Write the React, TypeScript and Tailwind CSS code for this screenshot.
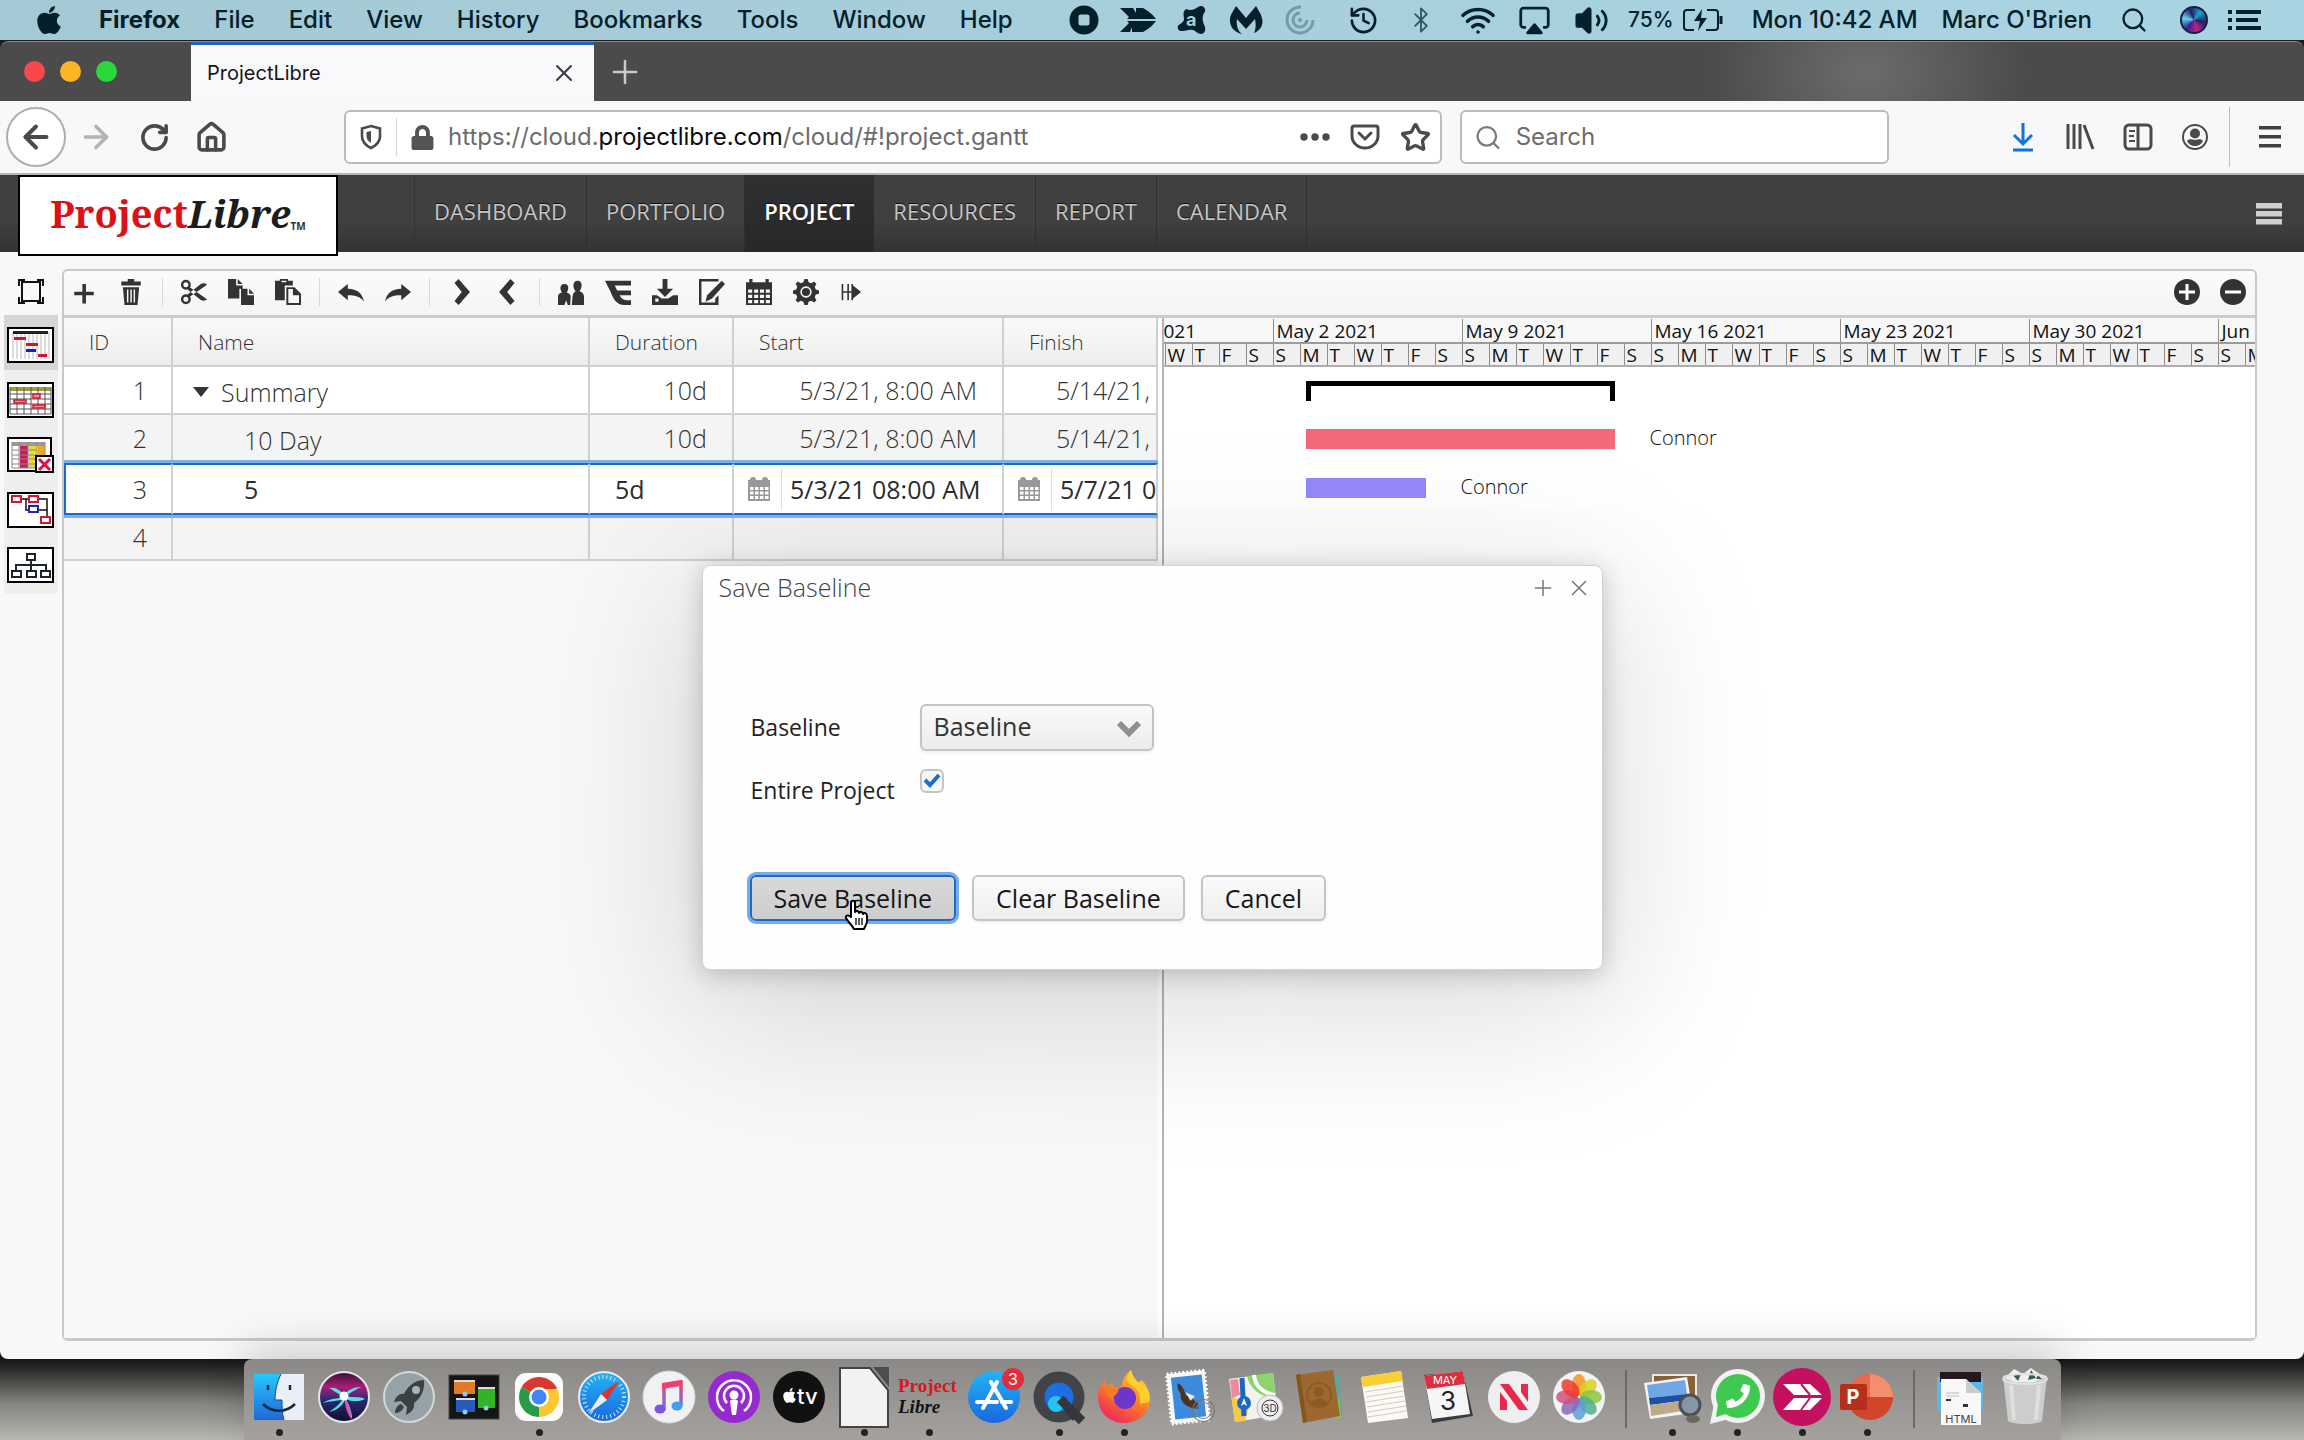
import type { ReactNode } from 'react'
import { Airplay, ArrowLeft, ArrowRight, Bluetooth, History, House, Plus, RotateCw, Search, Star, Volume2, Wifi, X } from 'lucide-react'
import { FaApple, FaLock, FaPhoneAlt } from 'react-icons/fa'

const sans = "font-['Inter','Liberation_Sans',sans-serif]"
const open = "font-['Open_Sans','Noto_Sans',sans-serif]"

/* ---------- menu bar ---------- */

const menus = ['File', 'Edit', 'View', 'History', 'Bookmarks', 'Tools', 'Window', 'Help']

function StatusSlot({ children }: { children: ReactNode }) {
  return <span className="flex w-[57px] justify-center">{children}</span>
}

function MenuBar() {
  return (
    <div className={`${sans} flex h-10 items-center justify-between bg-linear-to-r from-[#a4c9d4] to-[#a9d4e2] pr-[42px] pl-[33px] text-2xl text-[#04202b]`}>
      <nav className="flex items-center gap-[34px]">
        <FaApple size={32} aria-label="Apple" />
        <span className="font-bold">Firefox</span>
        {menus.map((m) => (
          <span key={m} className="font-medium">{m}</span>
        ))}
      </nav>
      <div className="flex items-center font-medium">
        <div className="mr-2 flex items-center">
          <span className="flex w-[54px] justify-center">
            <svg width="30" height="30" viewBox="0 0 30 30"><circle cx="15" cy="15" r="14.5" fill="currentColor" /><rect x="9.500" y="9.500" width="11" height="11" rx="2" fill="#a6cdd8" /></svg>
          </span>
          <span className="flex w-[54px] justify-center">
            <svg width="38" height="26" viewBox="0 0 38 26" fill="currentColor"><path d="M1 1h13l3 5v-5h7c6 3 10 7 13 11H8l2-2z" /><path d="M1 25h10l2-5v5h11c6-3 10-7 13-11H8l2 2z" /></svg>
          </span>
          <span className="flex w-[54px] justify-center">
            <svg width="30" height="30" viewBox="0 0 30 30"><path d="M9 4c4 2 8 1 12-2 3-2 6-1 7 2 1 2-1 4-2 6-1 4 0 8 2 12 1 4-1 7-4 7s-5-3-8-4c-4-1-7 1-11 1-3 0-5-2-4-5 1-2 4-2 6-6 0-4-2-8 2-11z" fill="currentColor" /><text x="9" y="21" fontSize="18" fontWeight="700" fontFamily="Inter" fill="#a6cdd8">a</text></svg>
          </span>
          <span className="flex w-[54px] justify-center">
            <svg width="34" height="30" viewBox="0 0 34 30" fill="currentColor"><path d="M13 29C2 27-2 16 3 8l4-7 10 12L27 1l4 7c5 9 2 17-6 20 2-4 2-9 1-14l-9 10-9-10c-1 7 1 12 5 15z" /></svg>
          </span>
          <span className="flex w-[54px] justify-center text-[#6f9dab]">
            <svg width="30" height="30" viewBox="0 0 30 30" fill="none" stroke="currentColor" strokeWidth="3"><path d="M16 2A13 13 0 1 0 28 15" /><path d="M15 8a7 7 0 1 0 7 7" /><circle cx="15" cy="15" r="2" fill="currentColor" stroke="none" /></svg>
          </span>
        </div>
        <StatusSlot><History size={31} /></StatusSlot>
        <StatusSlot><Bluetooth size={28} strokeWidth={1.6} className="text-[#2d5563]" /></StatusSlot>
        <StatusSlot><Wifi size={36} strokeWidth={2.4} /></StatusSlot>
        <StatusSlot><Airplay size={33} className="[&>path:last-child]:fill-current" /></StatusSlot>
        <StatusSlot><Volume2 size={35} className="[&>path:first-child]:fill-current" /></StatusSlot>
        <span className="ml-2 text-[21px]">75%</span>
        <svg width="42" height="24" viewBox="0 0 42 24" className="ml-2" fill="none" stroke="currentColor" strokeWidth="2">
          <path d="M13 2H5a3 3 0 0 0-3 3v14a3 3 0 0 0 3 3h7M25 2h8a3 3 0 0 1 3 3v14a3 3 0 0 1-3 3h-9" />
          <path d="M20 1l-8 12h6l-2 10 9-13h-6z" fill="currentColor" stroke="none" />
          <path d="M39 8v8" strokeWidth="3" />
        </svg>
        <span className="ml-7">Mon 10:42 AM</span>
        <span className="ml-6">Marc O'Brien</span>
        <Search size={28} className="ml-7" />
        <span className="ml-8 size-7 rounded-full border-2 border-[#182047] bg-[conic-gradient(from_40deg,#17a5c9,#242067,#b82582,#3b1e8b,#62d4f0,#271d6a,#17a5c9)]" />
        <svg width="34" height="22" viewBox="0 0 34 22" className="ml-5" fill="currentColor">
          <path d="M0 1h4v4H0zM8 1h25v4H8zM0 9h4v4H0zM8 9h22v4H8zM0 17h4v4H0zM8 17h25v4H8z" />
        </svg>
      </div>
    </div>
  )
}

/* ---------- browser chrome ---------- */

function TabStrip() {
  return (
    <div className="flex h-[60px] items-stretch rounded-t-lg border-t border-[#8a8c8c] bg-[radial-gradient(ellipse_160px_120px_at_81%_50%,#6b6d6d,transparent)] bg-[#4a4b4a]">
      <div className="flex w-[191px] items-center gap-[15px] pl-6">
        <span className="size-[21px] rounded-full bg-[#f9474c]" />
        <span className="size-[21px] rounded-full bg-[#fcb625]" />
        <span className="size-[21px] rounded-full bg-[#2bd739]" />
      </div>
      <div className={`${sans} flex w-[403px] items-center justify-between border-t-3 border-[#2160c4] bg-[#f9f9fb] px-4 text-[20px] text-[#15141a]`}>
        ProjectLibre
        <button aria-label="Close tab"><X size={28} strokeWidth={1.8} className="text-[#3e3e42]" /></button>
      </div>
      <button aria-label="New tab" className="px-3"><Plus size={38} strokeWidth={1.6} className="text-[#c9caca]" /></button>
    </div>
  )
}

function NavBar() {
  return (
    <div className={`${sans} flex h-[74px] items-center border-b-2 border-[#b6b6b8] bg-[#f8f8fa] text-[#4a4a4c]`}>
      <button aria-label="Back" className="ml-[6px] flex size-[60px] items-center justify-center rounded-full border-2 border-[#adadaf] bg-white"><ArrowLeft size={36} strokeWidth={2.6} /></button>
      <button aria-label="Forward" className="flex w-[59px] justify-center text-[#b3b3b5]"><ArrowRight size={36} strokeWidth={2.4} /></button>
      <button aria-label="Reload" className="flex w-[59px] justify-center"><RotateCw size={31} strokeWidth={2.8} /></button>
      <button aria-label="Home" className="flex w-[54px] justify-center"><House size={33} strokeWidth={2.6} /></button>
      <div className="ml-[106px] flex h-[54px] flex-[1109] items-center rounded-md border-2 border-[#bcbcbe] bg-white">
        <svg width="24" height="26" viewBox="0 0 24 26" className="mx-[13px]" fill="none" stroke="#4a4a4c" strokeWidth="2.600"><path d="M12 2l9 2.500v8c0 5-4 9-9 11.500C7 21.500 3 17.500 3 12.500v-8z" /><path d="M12 7v12c-3-2-4.500-4-4.500-7V8z" fill="#4a4a4c" stroke="none" /></svg>
        <span className="h-[38px] w-px bg-[#d3d3d5]" />
        <FaLock size={25} className="mx-[13px] text-[#545456]" />
        <div role="textbox" contentEditable suppressContentEditableWarning aria-label="Address" className="flex-1 text-2xl text-[#6c6c6e] outline-none">
          https://cloud.<span className="text-[#0c0c0d]">projectlibre.com</span>/cloud/#!project.gantt
        </div>
        <button aria-label="Page actions" className="mr-5">
          <svg width="30" height="8" viewBox="0 0 30 8" fill="#4a4a4c"><circle cx="4" cy="4" r="3.700" /><circle cx="15" cy="4" r="3.700" /><circle cx="26" cy="4" r="3.700" /></svg>
        </button>
        <button aria-label="Save to Pocket" className="mr-5">
          <svg width="30" height="26" viewBox="0 0 30 26" fill="none" stroke="#4a4a4c" strokeWidth="3"><path d="M4 2h22a2 2 0 0 1 2 2v8a13 12 0 0 1-26 0V4a2 2 0 0 1 2-2z" /><path d="M9 9l6 6 6-6" strokeLinecap="round" /></svg>
        </button>
        <button aria-label="Bookmark" className="mr-[9px]"><Star size={31} strokeWidth={2.6} /></button>
      </div>
      <label className="ml-[18px] flex h-[54px] flex-[419] items-center rounded-md border-2 border-[#bcbcbe] bg-white pl-3">
        <Search size={31} className="text-[#7b7b7d]" />
        <input type="search" placeholder="Search" aria-label="Search" className="ml-[14px] w-full min-w-0 text-2xl outline-none placeholder:text-[#6c6c6e]" />
      </label>
      <div className="ml-[120px] flex items-center gap-7">
        <svg width="28" height="30" viewBox="0 0 28 30" fill="none" stroke="#0f71e6" strokeWidth="3"><path d="M14 1v20M5 13l9 9 9-9M4 28h20" /></svg>
        <svg width="30" height="28" viewBox="0 0 30 28" fill="none" stroke="currentColor" strokeWidth="3"><path d="M3 1v25M9 1v25M15 1v25M19 2l9 24" /></svg>
        <svg width="30" height="28" viewBox="0 0 30 28" fill="none" stroke="currentColor" strokeWidth="3"><rect x="2" y="2" width="26" height="24" rx="4" /><path d="M15 2v24" /><path d="M6 8h6M6 13h5M6 18h6" strokeWidth="2" /></svg>
        <svg width="28" height="28" viewBox="0 0 28 28"><circle cx="14" cy="14" r="12" fill="none" stroke="currentColor" strokeWidth="2" /><circle cx="14" cy="10.500" r="5" fill="currentColor" /><path d="M6 18c3-3 5-1 8-1s5-2 8 1c-2 4-5 5-8 5s-6-1-8-5z" fill="currentColor" /></svg>
      </div>
      <span className="ml-5 h-[60px] w-px bg-[#bdbdbf]" />
      <button aria-label="Open menu" className="mr-[22px] ml-7">
        <svg width="24" height="24" viewBox="0 0 24 24" fill="#404042"><path d="M1 1h22v3.500H1zM1 10h22v3.500H1zM1 19h22v3.500H1z" /></svg>
      </button>
    </div>
  )
}

/* ---------- application ---------- */

const sections = ['DASHBOARD', 'PORTFOLIO', 'PROJECT', 'RESOURCES', 'REPORT', 'CALENDAR']

function AppHeader() {
  return (
    <header className="flex h-[77px] items-stretch bg-linear-to-b from-[#404040] from-60% to-[#343333]">
      <a href="#dashboard" className="z-10 -mb-1 ml-[18px] flex w-[320px] items-center justify-center border-2 border-black bg-white pb-1 font-['Noto_Serif','Liberation_Serif',serif] text-[38px] font-bold">
        <span className="text-[#dc1017]">Project</span>
        <span className="text-[#1c1c1c] italic">Libre</span>
        <span className="self-end pb-4 font-sans text-[10px] text-[#333]">TM</span>
      </a>
      <nav className={`${open} ml-[76px] flex border-l border-[#333] text-[22px] text-[#c6c6c6] [text-shadow:0_-1px_0_#111]`}>
        {sections.map((s) => (
          <a
            key={s}
            href={`#${s.toLowerCase()}`}
            className={`flex items-center border-r border-[#2e2e2e] px-[19px] pb-1 ${s === 'PROJECT' ? 'bg-linear-to-b from-[#2e3032] to-[#26282a] font-semibold text-white' : 'font-medium'}`}
          >
            {s}
          </a>
        ))}
      </nav>
      <button aria-label="Menu" className="mr-[22px] ml-auto">
        <svg width="26" height="22" viewBox="0 0 26 22" fill="#cfcfcf"><path d="M0 0h26v5.500H0zM0 8h26v5.500H0zM0 16h26v5.500H0z" /></svg>
      </button>
    </header>
  )
}

const views: { name: string; art: ReactNode }[] = [
  {
    name: 'Gantt',
    art: (
      <>
        <path d="M6 5v27M10 5v27M14 5v27M18 5v27M22 5v27M26 5v27M30 5v27M34 5v27M38 5v27M42 5v27" stroke="#b9b9b9" />
        <path d="M6 4h35v3H6z" fill="#222" />
        <path d="M7 10h12v3H7zM19 16h12v3H19zM31 27h9v3h-9z" fill="#d3142e" />
        <path d="M19 22h10v3H19z" fill="#1a1ad0" />
      </>
    ),
  },
  {
    name: 'Task usage',
    art: (
      <>
        <path d="M3 5h41v4H3z" fill="#9c9a3a" />
        <path d="M3 5v27h41V5M10 5v27M17 5v27M24 5v27M31 5v27M38 5v27M3 12h41M3 17h41M3 22h41M3 27h41" fill="none" stroke="#555" />
        <path d="M7 18h12v3H7zM26 12h7v4h-7zM26 23h12v3H26z" fill="#ef8d99" stroke="#cf1830" strokeWidth="1.500" />
      </>
    ),
  },
  {
    name: 'Resource usage',
    art: (
      <>
        <path d="M5 5h33v4H5z" fill="#999" />
        <path d="M13 9h8v22h-8z" fill="#c81d56" />
        <path d="M22 9h8v22h-8z" fill="#eadb2e" />
        <path d="M31 9h7v22h-7z" fill="#eeaa27" />
        <path d="M5 5v26h33V5M12 5v26M21 5v26M30 5v26M5 13h25M5 18h25M5 22h25M5 27h25" fill="none" stroke="#888" />
        <rect x="29" y="19" width="17" height="16" fill="#fff" stroke="#000" strokeWidth="2" />
        <path d="M32 22l11 11M43 22l-11 11" stroke="#e01040" strokeWidth="3" />
      </>
    ),
  },
  {
    name: 'Network',
    art: (
      <>
        <path d="M14 7h8M19 7v11h3M32 7h8v18M32 18h8" fill="none" stroke="#111" strokeWidth="1.500" />
        <path d="M5 4h9v6H5zM22 4h9v6h-9zM34 25h9v6h-9z" fill="#fff" stroke="#cf1838" strokeWidth="2" />
        <path d="M22 14h9v6h-9z" fill="#fff" stroke="#2222c5" strokeWidth="2" />
      </>
    ),
  },
  {
    name: 'WBS',
    art: <path d="M20 7h8v6h-8zM5 24h9v6H5zM20 24h9v6h-9zM34 24h9v6h-9zM24 13v11M9 24v-6h30v6" fill="none" stroke="#1b2430" strokeWidth="2" />,
  },
]

function Sidebar() {
  return (
    <aside className="flex w-[62px] flex-col items-stretch pr-[4px] pl-1">
      <button aria-label="Full screen" className="flex h-[46px] items-center justify-center">
        <svg width="28" height="28" viewBox="0 0 28 28" fill="none" stroke="#111" strokeWidth="2"><rect x="5" y="4" width="18" height="19" /><path d="M2 8V2h6M20 2h6v6M26 19v6h-6M8 25H2v-6" /></svg>
      </button>
      <div className="rounded-b bg-[#eeeeee] pb-1">
        {views.map((v, i) => (
          <button key={v.name} aria-label={v.name} className={`flex h-[55px] w-full items-center justify-center pt-[6px] ${i === 0 ? 'bg-[#d6d6d6]' : ''}`}>
            <svg width="48" height="37" viewBox="0 0 48 37">
              <rect x="1" y="1" width={i === 2 ? 43 : 45} height={i === 2 ? 33 : 34} fill="#fff" stroke="#000" strokeWidth="2" />
              {v.art}
            </svg>
          </button>
        ))}
      </div>
    </aside>
  )
}

const tools: (null | { name: string; art: ReactNode })[] = [
  { name: 'Add', art: <path d="M7 3h2.200v4.800H14V10H9.200v5H7v-5H2V7.800h5z" /> },
  { name: 'Delete', art: <path d="M6 0h4v1.500h4V4H2V1.500h4zM3 5h10l-1 11H4zM5.500 6.500v8h.9v-8zM7.600 6.500v8h.9v-8zM9.600 6.500v8h.9v-8z" fillRule="evenodd" /> },
  null,
  {
    name: 'Cut',
    art: (
      <>
        <g fill="none" stroke="currentColor" strokeWidth="1.500"><circle cx="3" cy="3.500" r="2.300" /><circle cx="3" cy="12.500" r="2.300" /></g>
        <path d="M4.500 4.500L16 12.500c-1.500 1.200-2.800 1-4 .2L4 6.500zM4.500 11.500L16 3.500c-1.500-1.200-2.800-1-4-.2L4 9.500z" />
      </>
    ),
  },
  { name: 'Copy', art: <path d="M0 0h5v4h4v2H7v6H0zM6 0l3 3H6zM8 6h4v4h4v6H8zM13 6l3 3h-3z" /> },
  { name: 'Paste', art: <path d="M0 1h3V0h5v1h3v3H6v9H0zM4 1v1h3V1zM7 5h5l4 4v7H7zM8.200 6.200v8.600h6.600V10H11V6.200z" fillRule="evenodd" /> },
  null,
  { name: 'Undo', art: <path d="M0 8l6-5v3c6 0 9 3 10 8-2-3-5-4-10-4v3z" /> },
  { name: 'Redo', art: <path d="M16 8l-6-5v3C4 6 1 9 0 14c2-3 5-4 10-4v3z" /> },
  null,
  { name: 'Indent', art: <path d="M4 2.500L6.500 0l7 8-7 8L4 13.500 8.500 8z" /> },
  { name: 'Outdent', art: <path d="M12 2.500L9.500 0l-7 8 7 8 2.500-2.500L7.500 8z" /> },
  null,
  { name: 'Resources', art: <path d="M12 1c2 0 2.800 1.500 2.500 3.500-.2 1.500-.8 2.500-1.200 3 1.500.5 2.700 1.500 2.700 3.500v5H8.500l.4-5c.2-2 .9-3 2-3.500-1-1-1.400-2-1.400-3.500C9.500 2 10.500 1 12 1zM4 3c1.700 0 2.500 1 2.300 2.800-.1 1.200-.6 2-1 2.500 1.200.4 2.200 1 2.500 2.200L7.500 16H6l-1-3-1 3H0v-5c0-1.500.8-2.300 2.500-2.700C2 7.500 1.600 7 1.500 5.800 1.400 4 2.300 3 4 3z" /> },
  { name: 'Work breakdown', art: <path d="M0 1h16v3H6l1.500 3H16v3H9c1 2 2.500 3 4 3h3v3h-4c-5 0-7-4-8.500-8z" /> },
  { name: 'Save', art: <path d="M6.500 0h3v6H13l-5 5-5-5h3.500zM0 10h3l3 2h4l3-2h3v6H0zM2 12v2h2v-2z" fillRule="evenodd" /> },
  { name: 'Edit', art: <path d="M0 0h12v1.500H1.500v13H10V12l2-2v6H0zM14 1l2 2-8 9-4 2 1-4z" fillRule="evenodd" /> },
  { name: 'Calendar', art: <path d="M0 2h2V0h2v2h8V0h2v2h2v14H0zM1.300 6.500V8.500h2.500v-2zM5 6.500v2h2.500v-2zM8.600 6.500v2h2.500v-2zM12.200 6.500v2h2.500v-2zM1.300 9.700v2h2.500v-2zM5 9.700v2h2.500v-2zM8.600 9.700v2h2.500v-2zM12.200 9.700v2h2.500v-2zM1.300 12.900v2h2.500v-2zM5 12.900v2h2.500v-2zM8.600 12.900v2h2.500v-2zM12.200 12.900v2h2.500v-2z" fillRule="evenodd" /> },
  {
    name: 'Settings',
    art: (
      <>
        <path d="M7 0h2l.6 2 1.600.6L13 1.600 14.400 3l-1 1.800.6 1.600 2 .6v2l-2 .6-.6 1.600 1 1.800-1.400 1.400-1.800-1-1.600.6L9 16H7l-.6-2-1.600-.6-1.800 1L1.600 13l1-1.800L2 9.600 0 9V7l2-.6.6-1.600-1-1.800L3 1.600l1.800 1L6.400 2z" />
        <circle cx="8" cy="8" r="3" fill="none" stroke="#f6f6f6" />
      </>
    ),
  },
  { name: 'Split', art: <path d="M1 3h1v4.500h2.500V3h1v4.500H7V3h1v1l5 4-5 4v1H7V8.500H5.500V13h-1V8.500H2V13H1z" /> },
]

function Toolbar() {
  return (
    <div className="flex h-[47px] items-center gap-4 rounded-t-md border-b-3 border-[#cbcbcb] bg-linear-to-b from-[#fbfbfb] to-[#f4f4f4] pr-[9px] pb-[3px] pl-1 text-[#333]">
      {tools.map((t, i) =>
        t ? (
          <button key={t.name} aria-label={t.name} className="flex w-[31px] justify-center">
            <svg width="26" height="26" viewBox="0 0 16 16" fill="currentColor">{t.art}</svg>
          </button>
        ) : (
          <span key={i} className="-mr-px h-[28px] w-px bg-[#dadada]" />
        ),
      )}
      <button aria-label="Zoom in" className="mr-1 ml-auto">
        <svg width="26" height="26" viewBox="0 0 26 26"><circle cx="13" cy="13" r="13" fill="#333" /><path d="M13 5v16M5 13h16" stroke="#fff" strokeWidth="3" /></svg>
      </button>
      <button aria-label="Zoom out">
        <svg width="26" height="26" viewBox="0 0 26 26"><circle cx="13" cy="13" r="13" fill="#333" /><path d="M5 13h16" stroke="#fff" strokeWidth="3" /></svg>
      </button>
    </div>
  )
}

function CalendarGlyph() {
  return (
    <svg width="24" height="26" viewBox="0 0 24 26" fill="#999">
      <path d="M1 4h2a3 3 0 0 1 6 0h6a3 3 0 0 1 6 0h2v21H1zM3 11v3h3.500v-3zM8 11v3h3.500v-3zM13 11v3h3.500v-3zM18 11v3h3.500v-3zM3 15.500v3h3.500v-3zM8 15.500v3h3.500v-3zM13 15.500v3h3.500v-3zM18 15.500v3h3.500v-3zM3 20v3h3.500v-3zM8 20v3h3.500v-3zM13 20v3h3.500v-3zM18 20v3h3.500v-3z" fillRule="evenodd" />
    </svg>
  )
}

function DateField({ label, value }: { label: string; value: string }) {
  return (
    <div className="flex items-center pl-[13px]">
      <button aria-label={`Pick ${label}`} className="pr-[10px]"><CalendarGlyph /></button>
      <input aria-label={label} defaultValue={value} className="h-[42px] w-[210px] shrink-0 border-l border-[#dedede] pl-2 outline-none" />
    </div>
  )
}

const td = 'overflow-hidden border-r-2 border-b-2 border-[#d0d0d0] whitespace-nowrap p-0'
const tdActive = 'overflow-hidden border-y-2 border-r-2 border-y-[#1c6ac6] border-r-[#d0d0d0] whitespace-nowrap p-0'

function TaskTable() {
  return (
    <div className="w-1/2 overflow-hidden bg-[#f8f8f8]">
      <table className={`${open} w-full table-fixed border-separate border-spacing-0 text-[25px] leading-8 font-light text-[#333]`}>
        <colgroup>
          <col className="w-[109px]" />
          <col className="w-[417px]" />
          <col className="w-[144px]" />
          <col className="w-[270px]" />
          <col />
        </colgroup>
        <thead>
          <tr className="h-[49px] bg-linear-to-b from-[#fafafa] to-[#ededed] text-left text-[21px]">
            {['ID', 'Name', 'Duration', 'Start', 'Finish'].map((h) => (
              <th key={h} className={`${td} pl-[25px] font-light`}>{h}</th>
            ))}
          </tr>
        </thead>
        <tbody>
          <tr className="h-12 bg-white">
            <td className={`${td} pr-[24px] text-right`}>1</td>
            <td className={`${td} pt-1 pl-5`}>
              <div className="flex items-center gap-3">
                <svg width="16" height="10" viewBox="0 0 16 10" fill="#333"><path d="M0 0h16L8 10z" /></svg>
                Summary
              </div>
            </td>
            <td className={`${td} pr-[25px] text-right`}>10d</td>
            <td className={`${td} pr-[25px] text-right`}>5/3/21, 8:00 AM</td>
            <td className={`${td} pl-[52px]`}>5/14/21,</td>
          </tr>
          <tr className="h-12 bg-[#f4f4f4]">
            <td className={`${td} pr-[24px] text-right`}>2</td>
            <td className={`${td} pt-1 pl-[71px]`}>10 Day</td>
            <td className={`${td} pr-[25px] text-right`}>10d</td>
            <td className={`${td} pr-[25px] text-right`}>5/3/21, 8:00 AM</td>
            <td className={`${td} pl-[52px]`}>5/14/21,</td>
          </tr>
          <tr className="relative z-10 h-[52px] bg-white font-normal text-[#2c2c2c] outline-3 outline-[#7db0ea]">
            <td className={`${tdActive} border-l-2 border-l-[#1c6ac6] pr-[24px] text-right font-light`}>3</td>
            <td className={`${tdActive} pl-[71px]`}><input aria-label="Name" defaultValue="5" className="block w-[300px] outline-none" /></td>
            <td className={`${tdActive} pl-[25px]`}><input aria-label="Duration" defaultValue="5d" className="block w-[100px] outline-none" /></td>
            <td className={tdActive}><DateField label="Start" value="5/3/21 08:00 AM" /></td>
            <td className={tdActive}><DateField label="Finish" value="5/7/21 05:00 PM" /></td>
          </tr>
          <tr className="h-[46px] bg-[#f4f4f4]">
            <td className={`${td} pr-[24px] text-right`}>4</td>
            <td className={td} />
            <td className={td} />
            <td className={td} />
            <td className={td} />
          </tr>
        </tbody>
      </table>
    </div>
  )
}

const weeks = ['May 2 2021', 'May 9 2021', 'May 16 2021', 'May 23 2021', 'May 30 2021', 'Jun 6 2021']
const days = ['S', 'M', 'T', 'W', 'T', 'F', 'S']
const DAY = 27

function Gantt() {
  const labels = [...days.slice(3), ...weeks.flatMap(() => days)]
  return (
    <div className={`${open} w-1/2 overflow-hidden border-l-2 border-[#b5b5b5] bg-white text-[19px] text-[#111]`}>
      <div className="flex h-[26px] border-b-2 border-[#9b9b9b] bg-[#f7f7f7] pt-px leading-6">
        <div className="w-[109px] shrink-0">021</div>
        {weeks.map((w) => (
          <div key={w} className="w-[189px] shrink-0 border-l border-[#8d8d8d] pl-[3px]">{w}</div>
        ))}
      </div>
      <div className="flex h-[23px] border-b-2 border-[#adadad] bg-[#f0f0f0] pl-px leading-[22px]">
        {labels.map((d, i) => (
          <div key={i} className="w-[27px] shrink-0 border-l border-[#8d8d8d] pl-[2px]">{d}</div>
        ))}
      </div>
      <div className="relative h-48 text-[20px] leading-7 font-light">
        {/* four days precede May 2, bars start on the morning of May 3 */}
        <div className="absolute top-[14px] h-5 border-x-5 border-t-5 border-black" style={{ left: 5 * DAY + 7, width: 309 }} />
        <div className="absolute top-[62px] h-5 bg-[#f2697c]" style={{ left: 5 * DAY + 7, width: 309 }} />
        <span className="absolute top-[57px]" style={{ left: 18 * DAY }}>Connor</span>
        <div className="absolute top-[111px] h-5 bg-[#9488fb]" style={{ left: 5 * DAY + 7, width: 120 }} />
        <span className="absolute top-[106px]" style={{ left: 11 * DAY }}>Connor</span>
      </div>
    </div>
  )
}

const btn = 'h-[46px] rounded-md border-2 bg-linear-to-b px-[22px] pt-[3px]'
const btnPlain = 'border-[#c4c4c4] from-[#fbfbfb] to-[#efefef] shadow-[0_2px_3px_rgba(0,0,0,0.06)]'
const btnFocused = 'border-[#1c69c7] from-[#d9d9d9] to-[#cdcdcd] shadow-[0_0_0_3px_#76ace8]'

function BaselineDialog() {
  return (
    <div role="dialog" aria-label="Save Baseline" className={`${open} relative h-[405px] w-[901px] rounded-lg border border-[#d2d2d2] bg-[#fefefe] text-[25px] text-[#222] shadow-[0_4px_24px_rgba(0,0,0,0.2),0_32px_160px_12px_rgba(0,0,0,0.15)]`}>
      <div className="flex h-[45px] items-center pr-[10px] pl-4 font-light text-[#444]">
        <h2 className="flex-1">Save Baseline</h2>
        <button aria-label="Maximize" className="mr-[10px] text-[#777]"><Plus size={26} strokeWidth={1.4} /></button>
        <button aria-label="Close" className="text-[#777]"><X size={26} strokeWidth={1.4} /></button>
      </div>
      <form className="px-12 pt-[93px]" onSubmit={(e) => e.preventDefault()}>
        <div className="flex items-center">
          <label htmlFor="baseline" className="w-[169px] text-[23px]">Baseline</label>
          <div className="relative">
            <select id="baseline" className="h-[47px] w-[234px] appearance-none rounded-md border-2 border-[#c4c4c4] bg-linear-to-b from-[#fafafa] to-[#ececec] pl-3 text-[#333] shadow-[0_2px_3px_rgba(0,0,0,0.06)]">
              <option>Baseline</option>
            </select>
            <svg width="26" height="18" viewBox="0 0 26 18" className="pointer-events-none absolute top-4 right-3" fill="none" stroke="#909090" strokeWidth="6"><path d="M3 3l10 10L23 3" /></svg>
          </div>
        </div>
        <div className="mt-[18px] flex items-start">
          <label htmlFor="entire" className="w-[169px] pt-[3px] text-[23px] leading-9">Entire Project</label>
          <div className="relative size-6">
            <input id="entire" type="checkbox" defaultChecked className="block size-6 appearance-none rounded-md border-2 border-[#c4c4c4] bg-[#f7f7f7]" />
            <svg viewBox="0 0 24 24" className="pointer-events-none absolute inset-0" fill="none" stroke="#1670cf" strokeWidth="4"><path d="M5 11l5 5 9-10" /></svg>
          </div>
        </div>
        <div className="-ml-px mt-[67px] flex gap-4 text-[#161616]">
          <button className={`${btn} ${btnFocused} relative`}>
            Save Baseline
            <svg width="28" height="32" viewBox="0 0 28 32" className="absolute top-[22px] left-[92px]" fill="#fff" stroke="#000" strokeWidth="2" strokeLinejoin="round">
              <path d="M7 18V4c0-3 4-3 4 0v9c1-2 4-1 4 1 1-2 4-1 4 1 1-2 4-1 4 2v5c0 3-2 5-3 8H10c-2-4-6-7-8-11-1-2 2-4 5-1z" />
              <path d="M12 19v7M15 19v7M18 19v7" strokeWidth="1.300" />
            </svg>
          </button>
          <button className={`${btn} ${btnPlain}`}>Clear Baseline</button>
          <button className={`${btn} ${btnPlain}`}>Cancel</button>
        </div>
      </form>
    </div>
  )
}

/* ---------- dock ---------- */

const petals = ['#f7931e', '#d9d021', '#8cc63f', '#4fb08c', '#5aa0d8', '#8a67b8', '#d05080', '#ee3a2c']

const dock: (null | { name: string; running?: boolean; art: ReactNode })[] = [
  {
    name: 'Finder',
    running: true,
    art: (
      <>
        <rect x="2" y="4" width="50" height="46" fill="#e9eff6" />
        <path d="M2 4h27c-4 8-6 17-6 26h7c0 7 0 13 2 20H2z" fill="url(#blue)" />
        <path d="M16 15v5M38 15v5" stroke="#142742" strokeWidth="2.500" />
        <path d="M11 34c9 9 23 9 32 0" fill="none" stroke="#142742" strokeWidth="2.500" />
        <path d="M29 4c-4 8-6 17-6 26h7c0 7 0 13 2 20" fill="none" stroke="#1c4b84" />
      </>
    ),
  },
  {
    name: 'Siri',
    art: (
      <>
        <circle cx="27" cy="27" r="25" fill="url(#siri)" stroke="#e5e5ea" strokeWidth="2" />
        <path d="M6 33c8-6 15-3 21-7-8-2-11-7-15-8 7-1 12 3 15 7 3-5 10-8 17-8-6 3-11 6-15 9 7 2 13 0 19 3-6 3-13 3-19 0 3 6 6 12 6 20-4-6-6-13-7-19-4 8-9 10-16 12 6-4 11-8 13-12-6 1-12 1-19 3z" fill="#5de0dc" />
        <path d="M27 26c4 7 7 13 7 23-5-7-6-15-7-23z" fill="#e04fb0" />
        <circle cx="27" cy="26" r="4.500" fill="#fff" />
      </>
    ),
  },
  {
    name: 'Launchpad',
    art: (
      <>
        <circle cx="27" cy="27" r="25" fill="#97a3a6" stroke="#d3d8d9" strokeWidth="2" />
        <path d="M42 10c-9 0-16 6-20 14-4-1-8 2-10 8l7-1 6 6-1 8c6-3 9-7 8-12 7-5 11-13 10-23z" fill="#394145" />
        <circle cx="34" cy="20" r="4" fill="#a9b4b7" />
        <path d="M19 34c-4 1-6 5-6 9 4 0 7-2 9-6z" fill="#394145" />
      </>
    ),
  },
  {
    name: 'Mission Control',
    art: (
      <>
        <rect x="2" y="5" width="50" height="44" fill="#151515" stroke="#444" />
        <path d="M7 11h21v13H7z" fill="#df7c25" />
        <path d="M31 18h17v20H31z" fill="#33b223" />
        <path d="M9 29h19v13H9z" fill="#2859bb" />
        <path d="M7 11h21M31 18h17M9 29h19" stroke="#ddd" strokeWidth="2" />
        <g fill="#8ec8ec"><circle cx="18" cy="24" r="2.500" /><circle cx="39" cy="38" r="2.500" /><circle cx="18" cy="42" r="2.500" /></g>
      </>
    ),
  },
  {
    name: 'Chrome',
    running: true,
    art: (
      <>
        <rect x="3" y="3" width="48" height="48" rx="11" fill="#fbfbfb" />
        <path d="M27 27L9.700 17A20 20 0 0 1 44.300 17z" fill="#d93830" />
        <path d="M27 27L44.300 17A20 20 0 0 1 27 47z" fill="#fbc72f" />
        <path d="M27 27V47A20 20 0 0 1 9.700 17z" fill="#289a4a" />
        <path d="M27 18h18l-9 15z" fill="#fbc72f" /><path d="M18 17h27l-1 2H27z" fill="#d93830" />
        <circle cx="27" cy="27" r="10" fill="#fff" /><circle cx="27" cy="27" r="7.500" fill="#4285f4" />
      </>
    ),
  },
  {
    name: 'Safari',
    art: (
      <>
        <circle cx="27" cy="27" r="25" fill="url(#sky)" stroke="#e9edf0" strokeWidth="2" />
        <circle cx="27" cy="27" r="20" fill="none" stroke="#cdeafd" strokeWidth="4" strokeDasharray="1 3" />
        <path d="M43 10L30 30l-6-6z" fill="#e2302c" /><path d="M11 44l13-20 6 6z" fill="#eee" />
      </>
    ),
  },
  {
    name: 'Music',
    art: (
      <>
        <circle cx="27" cy="27" r="26" fill="#f1f1f3" stroke="#d6d6da" />
        <path d="M22 40V15l17-3v24" fill="none" stroke="url(#note)" strokeWidth="3.500" /><path d="M20 13l19-3v6l-19 3z" fill="#ee3e72" />
        <ellipse cx="18" cy="39" rx="5.500" ry="4.500" fill="#7a55e8" /><ellipse cx="35" cy="36" rx="5.500" ry="4.500" fill="#419ff0" />
      </>
    ),
  },
  {
    name: 'Podcasts',
    art: (
      <>
        <circle cx="27" cy="27" r="26" fill="#9629cf" />
        <g fill="none" stroke="#fff" strokeWidth="2.500"><path d="M17 41a17 17 0 1 1 20 0" /><path d="M20 33a10 10 0 1 1 14 0" /></g>
        <circle cx="27" cy="25" r="4.500" fill="#fff" /><path d="M23 31c2-2 6-2 8 0l-2 14h-4z" fill="#fff" />
      </>
    ),
  },
  {
    name: 'Apple TV',
    art: (
      <>
        <circle cx="27" cy="27" r="26" fill="#111" />
        <g transform="translate(9 17)"><FaApple size={17} color="#fff" /></g>
        <text x="25" y="34" fontSize="22" fontFamily="Inter" fontWeight="500" fill="#fff">tv</text>
      </>
    ),
  },
  {
    name: 'LibreOffice',
    running: true,
    art: <><path d="M3-2h30l18 22v37H3z" fill="#f2f2f2" stroke="#444" strokeWidth="2" /><path d="M36-3h16v20z" fill="#4d4d4d" /></>,
  },
  {
    name: 'ProjectLibre',
    running: true,
    art: (
      <g fontFamily="Liberation Serif, serif" fontWeight="700" fontSize="19">
        <text x="-4" y="22" fill="#d81820">Project</text>
        <text x="-4" y="43" fill="#111" fontStyle="italic">Libre</text>
      </g>
    ),
  },
  {
    name: 'App Store',
    art: (
      <>
        <circle cx="27" cy="27" r="26" fill="url(#sky)" />
        <path d="M30 12L16 38M24 12l15 26M10 32h20M35 32h9" stroke="#fff" strokeWidth="4" strokeLinecap="round" />
        <circle cx="46" cy="9" r="11" fill="#e22c3c" /><text x="46" y="15" textAnchor="middle" fontSize="16" fontFamily="Inter" fill="#fff">3</text>
      </>
    ),
  },
  {
    name: 'QuickTime',
    running: true,
    art: <><circle cx="27" cy="27" r="20" fill="#1b6fe0" stroke="#414349" strokeWidth="11" /><circle cx="24" cy="34" r="8" fill="#26c3ee" /><path d="M28 29l22 22M30 30l14 18" stroke="#34363b" strokeWidth="9" /></>,
  },
  {
    name: 'Firefox',
    running: true,
    art: (
      <>
        <path d="M27 53C12 53 1 42 1 27c0-7 3-13 7-17l1 7 6-4 2 4 6 1c3-5 3-12 11-18 2 8 6 9 6 13l5-3c6 7 8 13 8 19 0 14-11 24-26 24z" fill="url(#fire)" />
        <path d="M34 0c-4 6-5 10-2 14 10 4 12 12 11 20l9-2c3-12-5-17-11-20-4-3-6-7-7-12z" fill="#ffcf32" />
        <circle cx="28" cy="28" r="11" fill="#6c37c9" /><path d="M8 17l14 3-3 5c-3 1-4 3-2 6-5-2-9-7-9-14z" fill="#f77a23" />
      </>
    ),
  },
  {
    name: 'Mail',
    art: (
      <g transform="rotate(-6 27 27)">
        <rect x="7" y="2" width="38" height="50" fill="#f7f7f7" stroke="#fff" strokeWidth="3" strokeDasharray="2 2" />
        <rect x="11" y="6" width="31" height="42" fill="#3c8bdc" />
        <path d="M17 12c5 2 6 8 7 13l6 4 6 6-2 5-8-3c-6-4-8-8-7-14-2-4-3-7-2-11z" fill="#4c3421" /><path d="M24 22l9 5-5 4z" fill="#ece8dd" />
        <circle cx="40" cy="42" r="11" fill="none" stroke="#777" /><circle cx="40" cy="42" r="8" fill="none" stroke="#888" />
      </g>
    ),
  },
  {
    name: 'Maps',
    art: (
      <>
        <path d="M2 9l44-6 5 42-43 7z" fill="#f4f2ea" /><path d="M20 6l26-3 3 25c-14 0-26-8-29-22z" fill="#8ed46e" /><path d="M27 5c1 11 9 18 21 20" fill="none" stroke="#fff" strokeWidth="4" />
        <path d="M4 25l18 12-4 14-10 1z" fill="#f6c948" /><path d="M3 10l8-1 2 16-8 3z" fill="#ef8b9e" /><path d="M15 8l2 38" stroke="#1a66ca" strokeWidth="5" /><circle cx="17" cy="33" r="7" fill="#1a66ca" /><path d="M17 28l3 8-3-2-3 2z" fill="#fff" />
        <circle cx="43" cy="38" r="13" fill="#eee" stroke="#bbb" /><circle cx="43" cy="38" r="8" fill="none" stroke="#333" /><text x="43" y="42" textAnchor="middle" fontSize="10" fontFamily="Inter" fill="#333">3D</text>
      </>
    ),
  },
  {
    name: 'Contacts',
    art: (
      <>
        <path d="M42 5l5 1 3 40-6 3z" fill="#58a9a0" /><path d="M47 25l2 22-5 2z" fill="#9bc043" />
        <path d="M4 5l37-5 7 46-37 7z" fill="#9c6830" /><path d="M4 5l4-1 7 48-4 1z" fill="#84551f" />
        <circle cx="27" cy="25" r="12" fill="none" stroke="#8a5b26" strokeWidth="2" /><circle cx="27" cy="22" r="5" fill="#8a5b26" /><path d="M19 33c4-6 12-6 16 0-5 4-11 4-16 0z" fill="#8a5b26" />
      </>
    ),
  },
  {
    name: 'Notes',
    art: (
      <>
        <path d="M4 7l40-6 7 47-40 5z" fill="#fbfaf5" /><path d="M4 7l40-6 2 10-40 6z" fill="#f8cf35" />
        <path d="M8 22l38-6M9 27l38-6M9 32l38-6M10 37l38-6M11 42l38-6M11 47l38-6" stroke="#cfccc4" />
      </>
    ),
  },
  {
    name: 'Calendar',
    art: (
      <>
        <path d="M2 5l39-3 10 44-41 7z" fill="#3a3a3c" /><path d="M2 6l39-5 7 43-38 5z" fill="#f6f6f6" /><path d="M2 6l39-5 2 13-38 5z" fill="#dd2f40" />
        <text x="23" y="14" textAnchor="middle" fontSize="11" fontFamily="Inter" fill="#fff">MAY</text>
        <text x="26" y="40" textAnchor="middle" fontSize="26" fontFamily="Inter" fill="#222">3</text>
      </>
    ),
  },
  {
    name: 'News',
    art: <><circle cx="27" cy="27" r="26" fill="#efeff1" /><path d="M13 14h9l19 26h-9zM13 22l7 9v9h-7zM34 14h7v18l-7-10z" fill="#e8294e" /></>,
  },
  {
    name: 'Photos',
    art: (
      <>
        <circle cx="27" cy="27" r="26" fill="#f3f3f5" />
        {petals.map((c, i) => (
          <ellipse key={c} cx="27" cy="15" rx="7" ry="11" fill={c} fillOpacity="0.85" transform={`rotate(${i * 45} 27 27)`} />
        ))}
      </>
    ),
  },
  null,
  {
    name: 'Preview',
    running: true,
    art: (
      <>
        <path d="M7 4h45v30H7z" fill="#ece8dd" /><path d="M9 6h41v27H9z" fill="#83623b" />
        <path d="M-1 13l43-6 6 36-43 6z" fill="#f3f3f3" /><path d="M2 15l38-5 2 14-38 4z" fill="#6fa7e6" /><path d="M4 28l38-4 1 6-38 5z" fill="#1d4fa3" /><path d="M5 35l38-5 1 10-38 6z" fill="#bda98b" />
        <circle cx="45" cy="35" r="10" fill="#8397a8" stroke="#4b5057" strokeWidth="3" /><ellipse cx="48" cy="49" rx="7" ry="4" fill="#6b665f" />
      </>
    ),
  },
  {
    name: 'WhatsApp',
    running: true,
    art: (
      <>
        <circle cx="28" cy="26" r="27" fill="#f2f2f2" /><path d="M4 34L0 54l19-5z" fill="#f2f2f2" />
        <circle cx="28" cy="26" r="22" fill="#3fc950" /><path d="M8 34L6 47l13-4z" fill="#3fc950" />
        <g transform="translate(16 14) scale(-1 1) translate(-24 0)"><FaPhoneAlt size={24} color="#fff" /></g>
      </>
    ),
  },
  {
    name: 'Skitch',
    running: true,
    art: <><circle cx="27" cy="27" r="29" fill="#c3105f" /><path d="M8 14h27l12 11H19zM19 28h28L35 40H8z" fill="#fff" /><path d="M26 14l9 11M26 40l9-12" stroke="#c3105f" strokeWidth="2" /></>,
  },
  {
    name: 'PowerPoint',
    running: true,
    art: (
      <>
        <circle cx="30" cy="27" r="23" fill="#d2452a" /><path d="M30 4a23 23 0 0 1 23 23H30z" fill="#f48e6f" /><path d="M30 4v23H7A23 23 0 0 1 30 4z" fill="#e9694a" />
        <rect x="0" y="14" width="27" height="26" rx="2" fill="#b42f1c" /><text x="13" y="34" textAnchor="middle" fontSize="20" fontWeight="700" fontFamily="Inter" fill="#fff">P</text>
      </>
    ),
  },
  null,
  {
    name: 'Downloads',
    art: (
      <>
        <path d="M4 7h46v34H4z" fill="#63b5e6" /><path d="M7 2h41v10H7z" fill="#231820" /><path d="M8 9h25l15 14v32H8z" fill="#f8f8f8" /><path d="M33 9v14h15z" fill="#ccc" />
        <path d="M13 23h13M13 26h13" stroke="#bbb" /><path d="M13 29h5v2h-5zM30 34h5v3h-5z" fill="#333" />
        <text x="28" y="53" textAnchor="middle" fontSize="11" fontFamily="Inter" fill="#444">HTML</text>
      </>
    ),
  },
  {
    name: 'Trash',
    art: (
      <>
        <path d="M5 6c8-4 36-4 44 0l-5 45c-5 4-29 4-34 0z" fill="#cdcdce" /><path d="M13 15l3 35M41 15l-3 35" stroke="#dfdfe0" strokeWidth="4" />
        <path d="M7 8l9-9 9 5 8-6 13 9-10 5H17z" fill="#f0f0f0" /><path d="M14 4l6 7 3-7zM30 10l3-10 5 8zM40 5l4 4h-6z" fill="#3d5b56" />
        <ellipse cx="27" cy="9" rx="22" ry="5" fill="none" stroke="#e2e2e2" strokeWidth="2" />
      </>
    ),
  },
]

function Dock() {
  return (
    <footer className="flex h-[81px] justify-center bg-linear-to-b from-[#151515] via-[#858581] via-55% to-[#b9b8b1]">
      <svg width="0" height="0" aria-hidden="true" className="absolute">
        <defs>
          <linearGradient id="blue" x1="0" y1="0" x2="0" y2="1"><stop stopColor="#27c8fb" /><stop offset="1" stopColor="#2067d9" /></linearGradient>
          <linearGradient id="sky" x1="0" y1="0" x2="0" y2="1"><stop stopColor="#23b4f6" /><stop offset="1" stopColor="#1a66df" /></linearGradient>
          <linearGradient id="note" x1="0" y1="0" x2="0" y2="1"><stop stopColor="#ee3e72" /><stop offset="1" stopColor="#5f7df0" /></linearGradient>
          <linearGradient id="fire" x1="0.800" y1="0" x2="0.200" y2="1"><stop stopColor="#ffd23a" /><stop offset="0.500" stopColor="#fd7a28" /><stop offset="1" stopColor="#ec1f63" /></linearGradient>
          <linearGradient id="siri" x1="0" y1="0" x2="0" y2="1"><stop stopColor="#3a0f3c" /><stop offset="0.300" stopColor="#a81f74" /><stop offset="0.550" stopColor="#2b2a78" /><stop offset="1" stopColor="#0f0e2c" /></linearGradient>
        </defs>
      </svg>
      <div className="z-10 flex rounded-t-lg bg-linear-to-b from-[#8b8987] to-[#a5a29e] px-[3px] shadow-[0_-6px_48px_rgba(0,0,0,0.2)]">
        {dock.map((d, i) =>
          d ? (
            <div key={d.name} className="flex w-[65px] flex-col items-center pt-[11px]">
              <svg width="54" height="54" viewBox="0 0 54 54" overflow="visible" role="img" aria-label={d.name}>{d.art}</svg>
              {d.running && <span className="mt-[5px] size-[7px] rounded-full bg-[#222]" />}
            </div>
          ) : (
            <span key={i} className="mx-[13px] mt-[11px] h-[58px] w-[2px] bg-[#6b6967]" />
          ),
        )}
      </div>
    </footer>
  )
}

export default function App() {
  return (
    <div className="flex min-h-screen flex-col overflow-hidden bg-[#1b1c1c]">
      <MenuBar />
      <div className="mt-px flex flex-1 flex-col overflow-hidden rounded-lg">
        <TabStrip />
        <NavBar />
        <div className="relative flex flex-1 flex-col bg-[#f8f8f8]">
          <AppHeader />
          <main className="flex flex-1 pt-[17px] pr-[47px] pb-[18px]">
            <Sidebar />
            <div className="flex min-w-0 flex-1 flex-col rounded-md border-2 border-b-3 border-[#c9c9c9] bg-white">
              <Toolbar />
              <div className="flex flex-1 gap-1">
                <TaskTable />
                <Gantt />
              </div>
            </div>
          </main>
          <div className="absolute inset-0 flex items-center justify-center">
            <BaselineDialog />
          </div>
        </div>
      </div>
      <Dock />
    </div>
  )
}
